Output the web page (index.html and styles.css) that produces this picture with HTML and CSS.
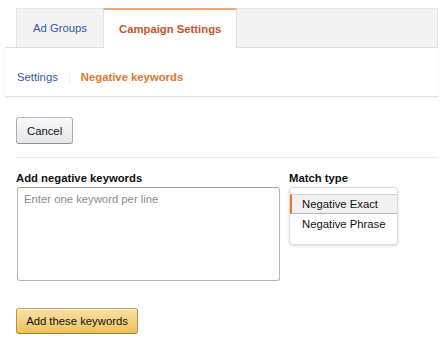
FILE: index.html
```html
<!DOCTYPE html>
<html lang="en">
<head>
    <meta charset="UTF-8">
    <meta name="viewport" content="width=device-width, initial-scale=1.0">
    <title>Negative keywords</title>
    <link rel="stylesheet" href="styles.css">
</head>
<body>
    <div class="page">
        <div class="tabs-wrap">
            <ul class="tabs">
                <li class="tab">Ad Groups</li>
                <li class="tab active">Campaign Settings</li>
            </ul>
        </div>
        <div class="subnav">
            <a class="subnav-link">Settings</a>
            <span class="sep"></span>
            <a class="subnav-link current">Negative keywords</a>
        </div>
        <div class="content">
            <button class="btn" type="button">Cancel</button>
            <div class="divider"></div>
            <div class="form-row">
                <div class="field keywords">
                    <label for="keywords">Add negative keywords</label>
                    <textarea id="keywords" placeholder="Enter one keyword per line"></textarea>
                </div>
                <div class="field match">
                    <label>Match type</label>
                    <ul class="dropdown">
                        <li class="option selected">Negative Exact</li>
                        <li class="option">Negative Phrase</li>
                    </ul>
                </div>
            </div>
            <button class="btn primary" type="button">Add these keywords</button>
        </div>
    </div>
</body>
</html>
```

FILE: styles.css
```css
body {
    margin: 0;
    font-family: 'Liberation Sans', Arial, sans-serif;
    font-size: 11.3px;
    color: #111;
    background-color: #fff;
}
.page {
    padding-top: 8px;
}
.tabs-wrap {
    margin: 0 8px 0 5px;
    border-bottom: 1px solid #dedede;
}
.tabs {
    list-style: none;
    margin: 0 0 0 11px;
    padding: 0;
    display: flex;
    height: 39px;
    background-color: #f3f3f3;
    border-top: 1px solid #e6e6e6;
    border-right: 1px solid #e6e6e6;
    box-sizing: border-box;
}
.tab {
    padding: 0 16px;
    line-height: 38px;
    color: #2f5aa8;
    border-left: 1px solid #e3e3e3;
}
.tab.active {
    background-color: #fff;
    color: #c9532b;
    font-weight: bold;
    padding: 0 15px;
    margin-top: -1px;
    margin-bottom: -1px;
    line-height: 38px;
    border-top: 2px solid #f0a878;
    border-right: 1px solid #e3e3e3;
}
.subnav {
    margin: 0 8px 0 5px;
    padding: 22px 0 12px 12px;
    line-height: 14px;
    display: flex;
    align-items: center;
    border-bottom: 1px solid #e2e2e2;
    box-shadow: 0 1px 2px rgba(0, 0, 0, 0.06);
}
.subnav-link {
    color: #2f5aa8;
}
.subnav-link.current {
    color: #e4772a;
    font-weight: bold;
}
.sep {
    width: 1px;
    height: 12px;
    margin: 0 11px;
    background-color: #eee;
}
.content {
    padding: 20px 8px 0 16px;
}
.btn {
    display: block;
    font-family: inherit;
    font-size: 11.3px;
    color: #111;
    height: 27px;
    padding: 0 10px;
    border: 1px solid #adb1b8;
    border-color: #b3b6bb #a8abb0 #909398;
    border-radius: 3px;
    background: linear-gradient(to bottom, #f7f8fa, #e5e7ea);
    box-shadow: 0 1px 0 rgba(255, 255, 255, 0.6) inset;
    cursor: pointer;
}
.btn.primary {
    width: 122px;
    height: 26px;
    margin-top: 27px;
    padding: 0;
    border-color: #c9a44c #b8933a #a0802e;
    background: linear-gradient(to bottom, #f8e0a6, #efc25a);
}
.divider {
    height: 1px;
    margin-top: 13px;
    background-color: #eaeaea;
}
.form-row {
    display: flex;
    gap: 9px;
    margin-top: 13px;
}
.field label {
    display: block;
    font-weight: bold;
    line-height: 14px;
    margin-bottom: 2px;
}
.keywords textarea {
    display: block;
    width: 263px;
    height: 94px;
    margin-left: 1px;
    box-sizing: border-box;
    padding: 5px 6px;
    font-family: inherit;
    font-size: 11.3px;
    border: 1px solid #b5b5b5;
    border-top-color: #a0a0a0;
    border-radius: 3px;
    resize: none;
}
.keywords textarea::placeholder {
    color: #8c8c8c;
}
.dropdown {
    list-style: none;
    margin: 1px 0 0;
    padding: 6px 0 10px;
    width: 109px;
    box-sizing: border-box;
    background-color: #fff;
    border: 1px solid #dcdcdc;
    border-radius: 4px;
    box-shadow: 0 1px 3px rgba(0, 0, 0, 0.15);
}
.option {
    line-height: 20px;
    padding-left: 12px;
    color: #111;
}
.option.selected {
    line-height: 18px;
    padding-left: 10px;
    background-color: #f1f1f1;
    border-left: 2px solid #e4772a;
    border-top: 1px solid #d0d0d0;
    border-bottom: 1px solid #b8b8b8;
}
```
